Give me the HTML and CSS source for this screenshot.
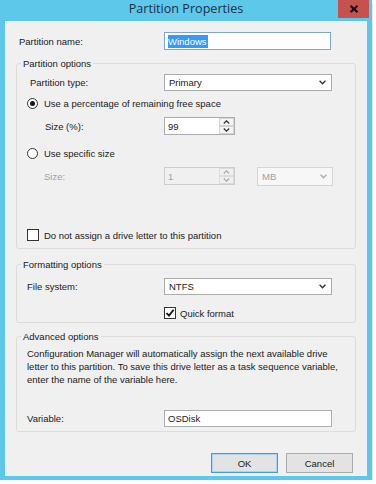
FILE: index.html
```html
<!DOCTYPE html>
<html lang="en">
<head>
    <meta charset="UTF-8">
    <title>Partition Properties</title>
    <link rel="stylesheet" href="styles.css">
</head>
<body>
<div class="window">
    <div class="titlebar">
        <span class="title">Partition Properties</span>
        <span class="close">
            <svg width="10" height="8" viewBox="0 0 10 8"><path d="M1.5 0.8 L8.5 7.2 M8.5 0.8 L1.5 7.2" stroke="#111" stroke-width="2.2" fill="none"/></svg>
        </span>
    </div>
    <div class="content">
        <div class="row row-name">
            <span class="lbl">Partition name:</span>
            <div class="field field-focus"><span class="selected">Windows</span></div>
        </div>

        <fieldset class="group group-part">
            <legend>Partition options</legend>
            <div class="row row-type">
                <span class="lbl">Partition type:</span>
                <div class="combo">
                    <span>Primary</span>
                    <svg width="7" height="5" viewBox="0 0 7 5"><path d="M0.6 0.8 L3.5 3.8 L6.4 0.8" fill="none" stroke="#333" stroke-width="1.3"/></svg>
                </div>
            </div>
            <div class="opt opt-pct">
                <span class="radio checked"></span>
                <span>Use a percentage of remaining free space</span>
            </div>
            <div class="row row-pct">
                <span class="lbl lbl-indent">Size (%):</span>
                <div class="spin">
                    <span class="spin-val">99</span>
                    <span class="spin-btns">
                        <span class="spin-btn"><svg width="7" height="4" viewBox="0 0 7 4"><path d="M0.8 3.5 L3.5 0.8 L6.2 3.5" fill="none" stroke="#333" stroke-width="1.2"/></svg></span>
                        <span class="spin-btn"><svg width="7" height="4" viewBox="0 0 7 4"><path d="M0.8 0.5 L3.5 3.2 L6.2 0.5" fill="none" stroke="#333" stroke-width="1.2"/></svg></span>
                    </span>
                </div>
            </div>
            <div class="opt opt-size">
                <span class="radio"></span>
                <span>Use specific size</span>
            </div>
            <div class="row row-size disabled">
                <span class="lbl lbl-indent2">Size:</span>
                <div class="spin">
                    <span class="spin-val">1</span>
                    <span class="spin-btns">
                        <span class="spin-btn"><svg width="7" height="4" viewBox="0 0 7 4"><path d="M0.8 3.5 L3.5 0.8 L6.2 3.5" fill="none" stroke="#aaa" stroke-width="1.2"/></svg></span>
                        <span class="spin-btn"><svg width="7" height="4" viewBox="0 0 7 4"><path d="M0.8 0.5 L3.5 3.2 L6.2 0.5" fill="none" stroke="#aaa" stroke-width="1.2"/></svg></span>
                    </span>
                </div>
                <div class="combo combo-unit">
                    <span>MB</span>
                    <svg width="7" height="5" viewBox="0 0 7 5"><path d="M0.6 0.8 L3.5 3.8 L6.4 0.8" fill="none" stroke="#aaa" stroke-width="1.3"/></svg>
                </div>
            </div>
            <div class="opt opt-letter">
                <span class="check"></span>
                <span>Do not assign a drive letter to this partition</span>
            </div>
        </fieldset>

        <fieldset class="group group-format">
            <legend>Formatting options</legend>
            <div class="row row-fs">
                <span class="lbl">File system:</span>
                <div class="combo">
                    <span>NTFS</span>
                    <svg width="7" height="5" viewBox="0 0 7 5"><path d="M0.6 0.8 L3.5 3.8 L6.4 0.8" fill="none" stroke="#333" stroke-width="1.3"/></svg>
                </div>
            </div>
            <div class="opt opt-quick">
                <span class="check">
                    <svg width="10" height="10" viewBox="0 0 10 10"><path d="M1.6 5.2 L4 7.6 L8.6 1.8" fill="none" stroke="#111" stroke-width="1.8"/></svg>
                </span>
                <span>Quick format</span>
            </div>
        </fieldset>

        <fieldset class="group group-adv">
            <legend>Advanced options</legend>
            <p class="note">Configuration Manager will automatically assign the next available drive<br>letter to this partition. To save this drive letter as a task sequence variable,<br>enter the name of the variable here.</p>
            <div class="row row-var">
                <span class="lbl">Variable:</span>
                <div class="field">OSDisk</div>
            </div>
        </fieldset>

        <div class="buttons">
            <span class="btn btn-default">OK</span>
            <span class="btn">Cancel</span>
        </div>
    </div>
</div>
</body>
</html>
```

FILE: styles.css
```css
* {
    box-sizing: border-box;
}
body {
    margin: 0;
    background: #fff;
    font-family: "Liberation Sans", Arial, sans-serif;
    font-size: 9.5px;
    color: #1a1a1a;
}
.window {
    width: 372px;
    height: 480px;
    background: #5ec8ea;
    padding: 0 5px 4px;
    display: flex;
    flex-direction: column;
    box-shadow: 0 4px 1px rgba(0, 0, 0, 0.55);
}
.titlebar {
    height: 21px;
    position: relative;
    display: flex;
    justify-content: center;
}
.title {
    font-family: "Open Sans", "Noto Sans", sans-serif;
    font-size: 12.6px;
    line-height: 17px;
    color: #17304b;
}
.close {
    position: absolute;
    top: 0;
    right: -2px;
    width: 31px;
    height: 18px;
    background: #c7514c;
    display: flex;
    align-items: center;
    justify-content: center;
}
.content {
    flex: 1;
    background: #f0f0f0;
    display: flex;
    flex-direction: column;
}
.row {
    display: flex;
    align-items: center;
}
.lbl {
    flex: 0 0 auto;
    width: 147px;
    padding-left: 13px;
}
.group-format .lbl, .group-adv .lbl {
    padding-left: 10px;
}
.lbl-indent {
    padding-left: 28px;
}
.lbl-indent2 {
    padding-left: 27px;
}
.row-name {
    margin-top: 11px;
    height: 18px;
}
.row-name .lbl {
    width: 159px;
    padding-left: 14px;
}
.field {
    width: 168px;
    height: 17px;
    background: #fff;
    border: 1px solid #abadb3;
    padding-left: 3px;
    display: flex;
    align-items: center;
}
.field-focus {
    width: 167px;
    height: 18px;
    border-color: #7ea4d8;
}
.selected {
    background: #3399ff;
    color: #fff;
    line-height: 13px;
    padding-right: 1px;
}
.group {
    margin: 7px 11px 0;
    padding: 0 0 5px;
    border: 1px solid #dcdcdc;
    border-radius: 3px;
    min-width: 0;
}
.group legend {
    margin-left: 4px;
    padding: 0 2px;
    line-height: 13px;
}
.row-type {
    margin-top: 4px;
    height: 17px;
}
.combo {
    width: 168px;
    height: 17px;
    background: #fff;
    border: 1px solid #acacac;
    padding: 0 5px 0 4px;
    display: flex;
    align-items: center;
    justify-content: space-between;
}
.opt {
    display: flex;
    align-items: center;
    height: 16px;
    padding-left: 10px;
}
.radio {
    width: 11px;
    height: 11px;
    border: 1px solid #333;
    border-radius: 50%;
    background: #fff;
    margin-right: 6px;
    display: flex;
    align-items: center;
    justify-content: center;
}
.radio.checked::after {
    content: "";
    width: 5px;
    height: 5px;
    border-radius: 50%;
    background: #1a1a1a;
}
.check {
    width: 12px;
    height: 12px;
    border: 1px solid #333;
    background: #fff;
    margin-right: 5px;
    display: flex;
    align-items: center;
    justify-content: center;
}
.opt-pct {
    margin-top: 4px;
}
.row-pct {
    margin-top: 6px;
    height: 18px;
}
.spin {
    width: 71px;
    height: 18px;
    background: #fff;
    border: 1px solid #abadb3;
    padding-left: 3px;
    display: flex;
    align-items: center;
    justify-content: space-between;
}
.spin-btns {
    width: 15px;
    height: 16px;
    display: flex;
    flex-direction: column;
}
.spin-btn {
    flex: 1;
    border: 1px solid #d4d4d4;
    background: #f4f4f4;
    display: flex;
    align-items: center;
    justify-content: center;
}
.opt-size {
    margin-top: 10px;
}
.row-size {
    margin-top: 6px;
    height: 18px;
}
.disabled {
    color: #a0a0a0;
}
.disabled .spin {
    background: #f0f0f0;
    border-color: #cdcdcd;
}
.disabled .spin-btn {
    border-color: #dcdcdc;
    background: #f0f0f0;
}
.combo-unit {
    width: 76px;
    height: 19px;
    margin-left: 22px;
    background: #f7f7f7;
    border-color: #d5d5d5;
}
.opt-letter {
    margin-top: 42px;
}
.group-format {
    margin-top: 9px;
    padding-bottom: 1px;
}
.row-fs {
    margin-top: 7px;
    height: 17px;
}
.opt-quick {
    margin-top: 10px;
    padding-left: 147px;
}
.opt-quick .check {
    margin-right: 4px;
}
.group-adv {
    padding-bottom: 4px;
}
.note {
    margin: 4px 0 0;
    padding-left: 10px;
    line-height: 13px;
}
.row-var {
    margin-top: 24px;
    height: 17px;
}
.buttons {
    margin-top: 21px;
    display: flex;
    justify-content: flex-end;
    gap: 8px;
    padding-right: 14px;
}
.btn {
    width: 67px;
    height: 20px;
    border: 1px solid #acacac;
    background: #e3e3e3;
    display: flex;
    align-items: center;
    justify-content: center;
}
.btn-default {
    border-color: #3c9be4;
    box-shadow: inset 0 0 0 1px #a9d4f3;
}
```
